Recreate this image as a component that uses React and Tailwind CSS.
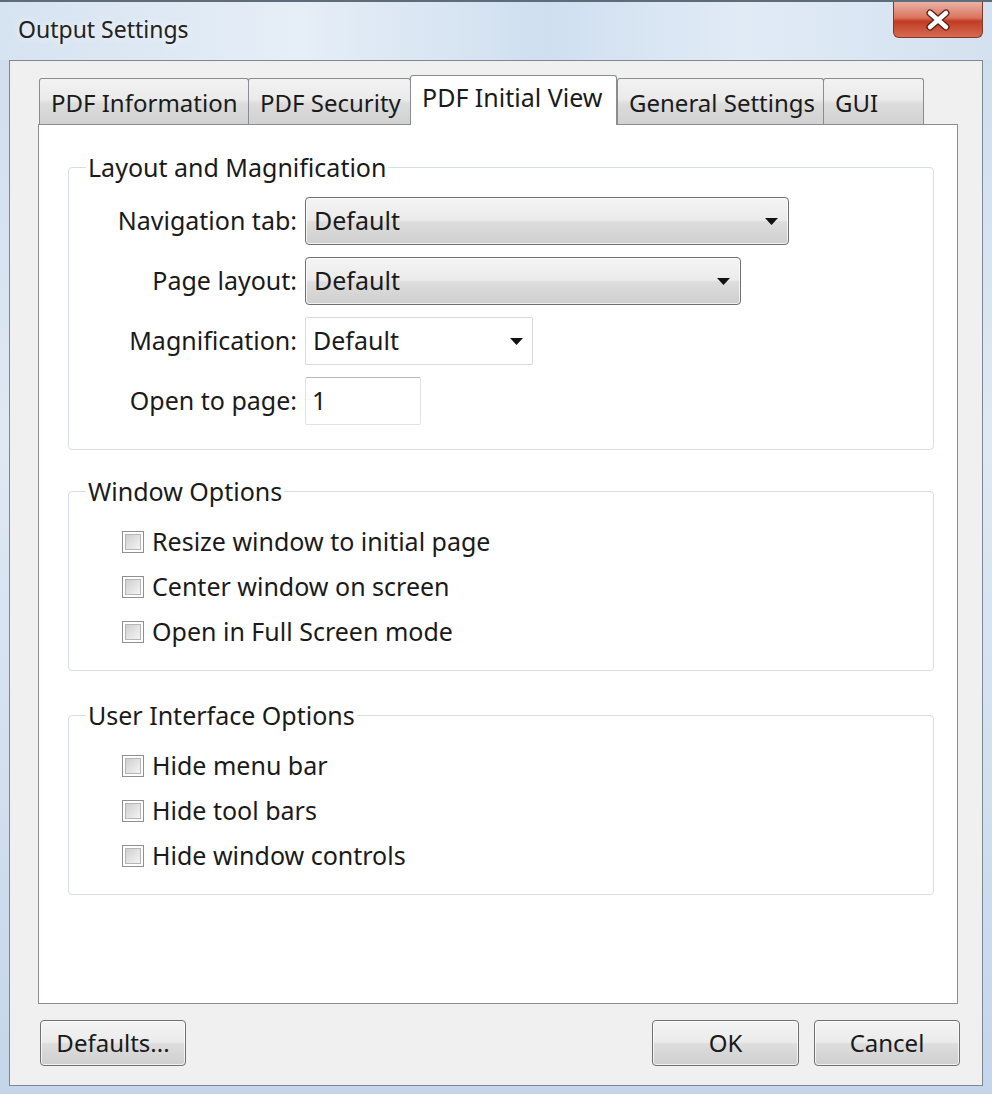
import React from 'react';

const TABS = [
  { label: 'PDF Information', w: 'w-[210px]' },
  { label: 'PDF Security', w: 'w-[163px]' },
  { label: 'PDF Initial View', w: 'w-[207px]', active: true },
  { label: 'General Settings', w: 'w-[207px]' },
  { label: 'GUI', w: 'w-[101px]' },
];

const GRAD = 'rounded-[4px] border border-[#707070] bg-[linear-gradient(to_bottom,#f4f4f4_0%,#ebebeb_48%,#dddddd_52%,#cfcfcf_100%)] text-[#1a1a1a] shadow-[inset_0_0_0_1px_rgba(255,255,255,0.7)]';
const BTN = `flex items-center justify-center h-[46px] text-[24px] ${GRAD}`;
const COMBO = `flex items-center justify-between h-[48px] pl-[8px] pr-[10px] ${GRAD}`;

function Arrow() {
  return (
    <svg width="13" height="7" viewBox="0 0 13 7" className="shrink-0">
      <path d="M0 0 H13 L6.5 7 Z" fill="#111" />
    </svg>
  );
}

function Checkbox({ label }) {
  return (
    <div className="flex items-center h-[45px]">
      <span className="w-[22px] h-[22px] border border-[#8f8f8f] bg-white p-[2px] shrink-0">
        <span className="block w-full h-full bg-[linear-gradient(135deg,#cfcfcf,#f4f4f4)] border border-[#b5b5b5]" />
      </span>
      <span className="ml-[8px]">{label}</span>
    </div>
  );
}

function Group({ title, className = '', children }) {
  return (
    <fieldset className={`border border-[#d5dfe5] rounded-[4px] ${className}`}>
      <legend className="ml-[17px] px-[2px] leading-[32px] text-[#1a1a1a]">{title}</legend>
      {children}
    </fieldset>
  );
}

function Row({ label, children }) {
  return (
    <div className="flex items-center h-[60px]">
      <div className="w-[236px] text-right pr-[8px] shrink-0">{label}</div>
      {children}
    </div>
  );
}

export default function App() {
  return (
    <div
      className="w-[992px] h-[1094px] overflow-hidden flex flex-col bg-[linear-gradient(to_bottom,#cddcec_0%,#dfe9f4_40%,#c5d6ea_100%)] text-[25px] text-[#1a1a1a]"
      style={{ fontFamily: '"Noto Sans", "Open Sans", "DejaVu Sans", sans-serif' }}
    >
      {/* title bar */}
      <div className="h-[60px] flex items-start border-t-[2px] border-[#5e6b78] bg-[linear-gradient(90deg,#d6e3f1_0%,#e6eef7_30%,#cfdff0_55%,#e1ebf6_75%,#d3e1f0_100%)]">
        <div className="pl-[18px] pt-[10px] text-[23px] text-[#222] [text-shadow:0_0_8px_#fff]">Output Settings</div>
        <div className="ml-auto mr-[9px] w-[90px] h-[36px] rounded-b-[6px] border border-t-0 border-[#83362a] bg-[linear-gradient(to_bottom,#eab2a5_0%,#d9735f_45%,#c23b24_55%,#d46b52_100%)] flex items-center justify-center">
          <svg width="26" height="22" viewBox="0 0 26 22">
            <path d="M5 4 L21 18 M21 4 L5 18" stroke="#5a1e14" strokeWidth="7" strokeLinecap="round" />
            <path d="M5 4 L21 18 M21 4 L5 18" stroke="#fff" strokeWidth="4.5" strokeLinecap="round" />
          </svg>
        </div>
      </div>

      {/* client area */}
      <div className="mx-[9px] h-[1026px] border border-[#7d8792] bg-[#f0f0f0] flex flex-col">
        {/* tabs */}
        <div className="flex items-end pl-[29px] pt-[13px] h-[63px] text-[24px]">
          {TABS.map(t =>
            t.active ? (
              <div key={t.label} className={`${t.w} h-[50px] -mb-px relative z-10 bg-white border border-b-0 border-[#898c95] rounded-t-[3px] pl-[11px] pt-[6px] leading-[30px] text-[25px]`}>
                {t.label}
              </div>
            ) : (
              <div key={t.label} className={`${t.w} h-[46px] -mr-px bg-[linear-gradient(to_bottom,#f2f2f2_0%,#ebebeb_45%,#dcdcdc_55%,#d2d2d2_100%)] border border-b-0 border-[#898c95] rounded-t-[3px] pl-[11px] pt-[9px] leading-[30px]`}>
                {t.label}
              </div>
            )
          )}
        </div>

        {/* panel */}
        <div className="ml-[28px] mr-[24px] h-[880px] bg-white border border-[#898c95] pl-[29px] pr-[23px] pt-[26px]">
          <Group title="Layout and Magnification" className="pt-[8px] pb-[18px]">
            <Row label="Navigation tab:">
              <div className={`${COMBO} w-[484px]`}>
                <span>Default</span>
                <Arrow />
              </div>
            </Row>
            <Row label="Page layout:">
              <div className={`${COMBO} w-[436px]`}>
                <span>Default</span>
                <Arrow />
              </div>
            </Row>
            <Row label="Magnification:">
              <div className="w-[228px] h-[48px] border border-[#d9d9d9] rounded-[2px] bg-white flex items-center justify-between pl-[7px] pr-[9px]">
                <span>Default</span>
                <Arrow />
              </div>
            </Row>
            <Row label="Open to page:">
              <div className="w-[116px] h-[48px] border border-[#dfe3e8] border-t-[#b5b9c0] rounded-[2px] bg-white flex items-center pl-[6px]">
                1
              </div>
            </Row>
          </Group>

          <Group title="Window Options" className="mt-[25px] pt-[12px] pb-[16px]">
            <div className="pl-[53px]">
              <Checkbox label="Resize window to initial page" />
              <Checkbox label="Center window on screen" />
              <Checkbox label="Open in Full Screen mode" />
            </div>
          </Group>

          <Group title="User Interface Options" className="mt-[28px] pt-[12px] pb-[16px]">
            <div className="pl-[53px]">
              <Checkbox label="Hide menu bar" />
              <Checkbox label="Hide tool bars" />
              <Checkbox label="Hide window controls" />
            </div>
          </Group>
        </div>

        {/* buttons */}
        <div className="flex items-center pl-[30px] pr-[22px] pt-[16px]">
          <button type="button" className={`${BTN} w-[146px]`}>Defaults...</button>
          <button type="button" className={`${BTN} w-[147px] ml-auto`}>OK</button>
          <button type="button" className={`${BTN} w-[146px] ml-[15px]`}>Cancel</button>
        </div>
      </div>
    </div>
  );
}
